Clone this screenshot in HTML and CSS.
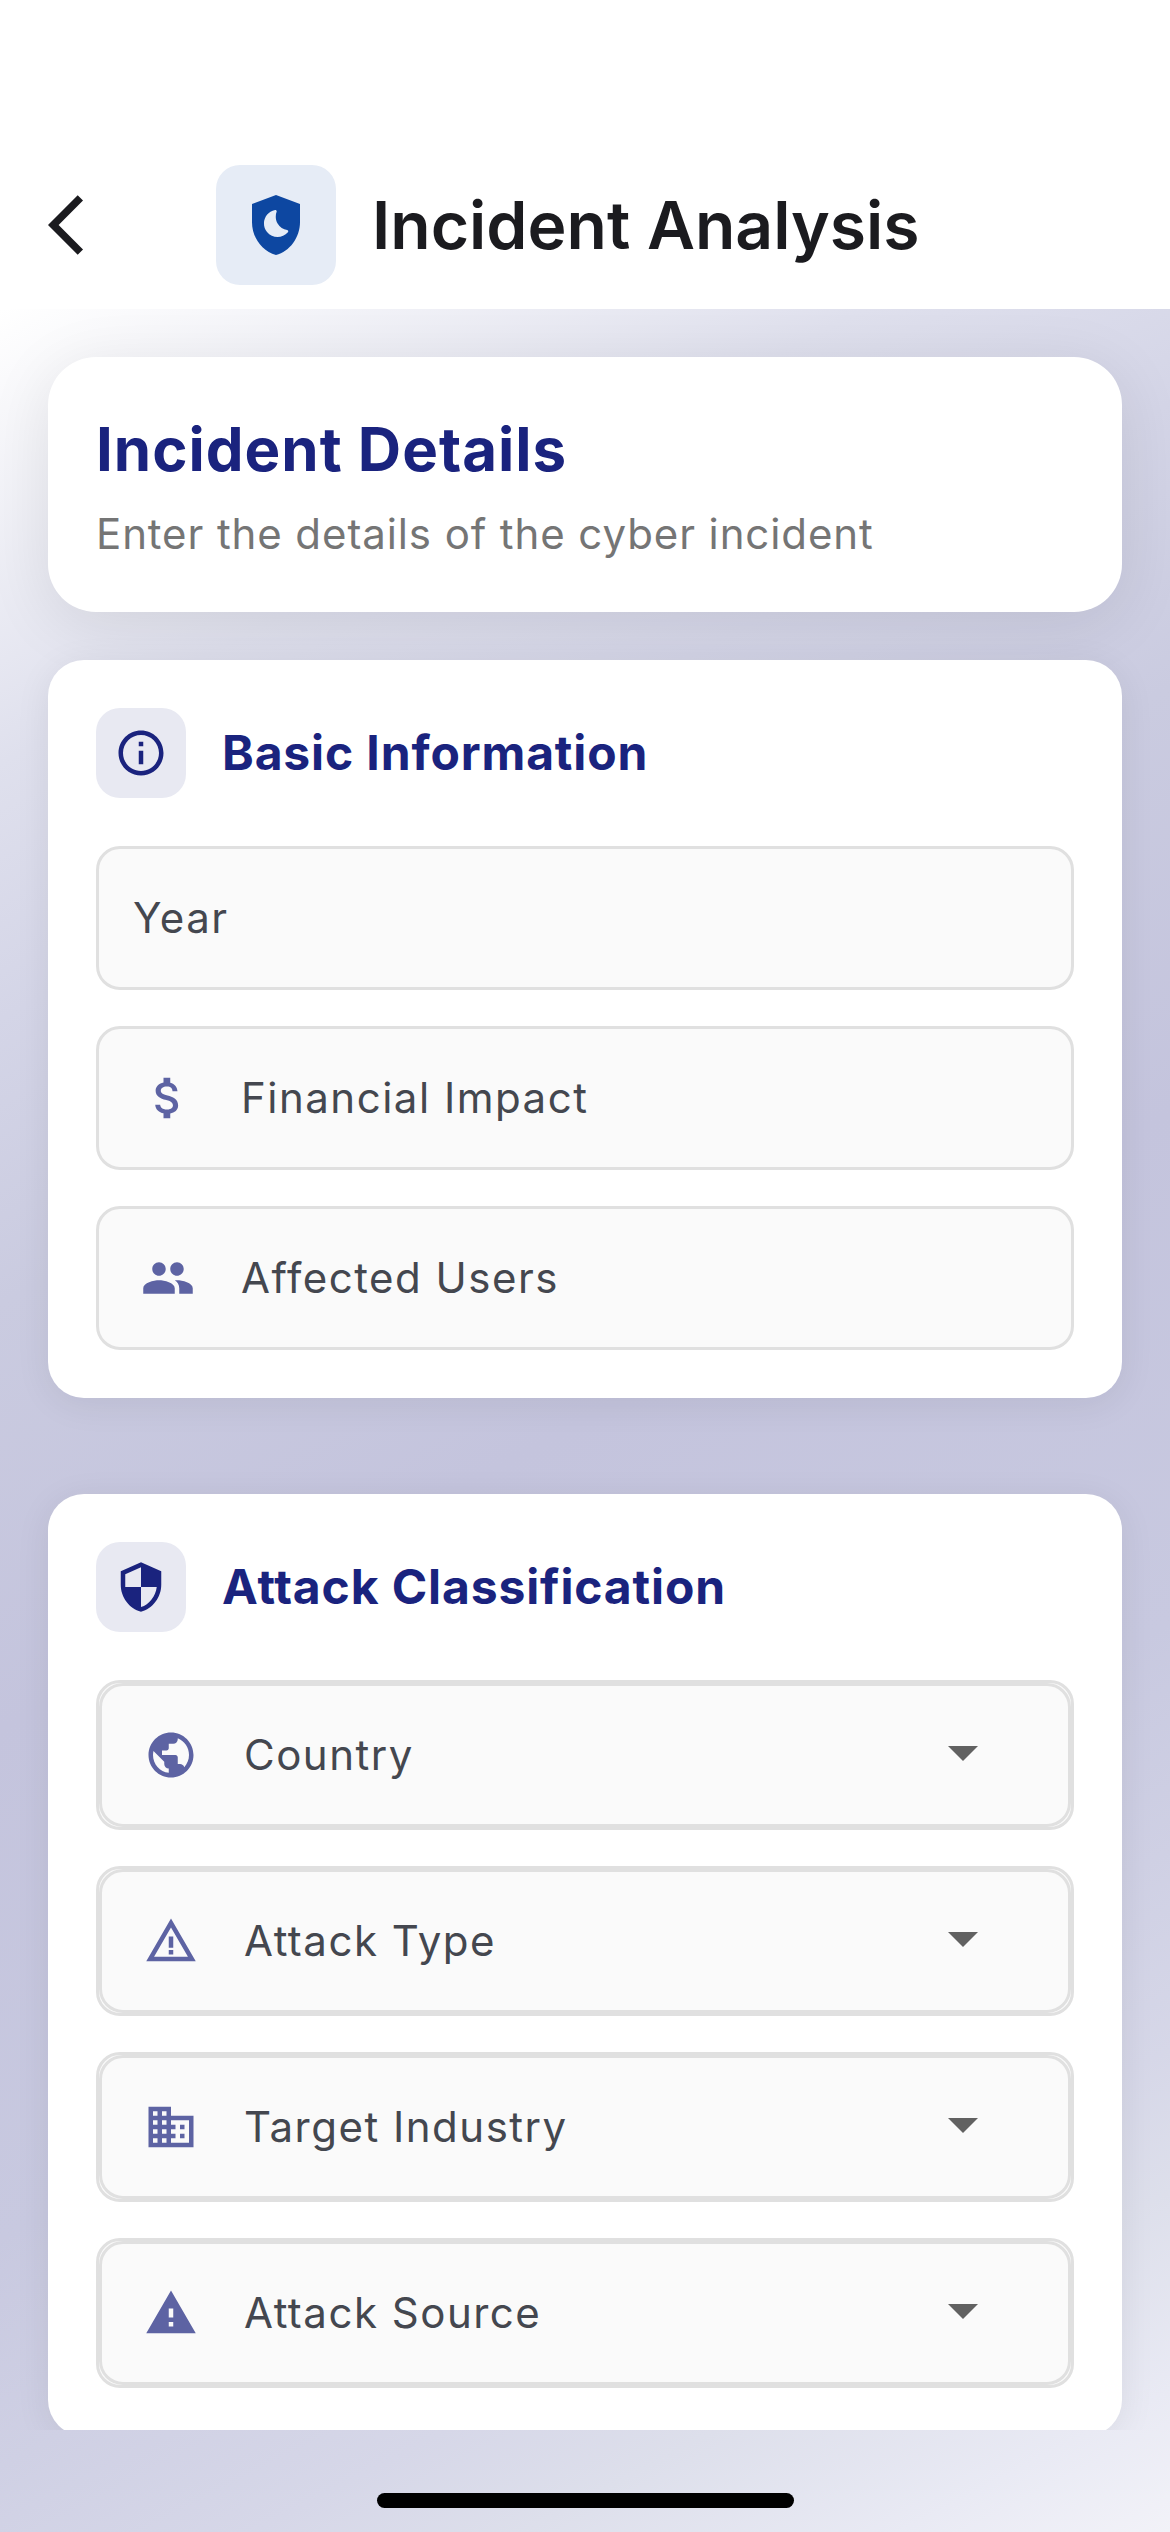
FILE: index.html
```html
<!DOCTYPE html>
<html lang="en">
<head>
<meta charset="utf-8">
<title>Incident Analysis</title>
<link rel="stylesheet" href="styles.css">
</head>
<body>
<div class="screen">
  <header class="app-bar">
    <svg class="back" viewBox="0 0 24 24"><path d="M11.67 3.87L9.9 2.1 0 12l9.9 9.9 1.77-1.77L3.54 12z"/></svg>
    <div class="brand">
      <span class="brand-icon"><svg viewBox="0 0 24 24"><path fill-rule="evenodd" d="M12 2L4 5v6.09c0 5.05 3.41 9.76 8 10.91 4.59-1.15 8-5.86 8-10.91V5L12 2zM15.97 14.41c-1.84 2.17-5.21 2.1-6.96-.07-2.19-2.72-.65-6.72 2.69-7.33.34-.06.63.27.51.6-.46 1.23-.39 2.64.32 3.86s1.89 1.99 3.18 2.2c.34.05.49.47.26.74z"/></svg></span>
      <h1 class="title">Incident Analysis</h1>
    </div>
  </header>
  <main class="body">
    <div class="scroll">
      <section class="card intro">
        <h2 class="intro-title">Incident Details</h2>
        <p class="intro-text">Enter the details of the cyber incident</p>
      </section>

      <section class="card group">
        <div class="group-head">
          <span class="group-icon"><svg viewBox="0 0 24 24"><path d="M11 7h2v2h-2zm0 4h2v6h-2zm1-9C6.48 2 2 6.48 2 12s4.48 10 10 10 10-4.48 10-10S17.52 2 12 2zm0 18c-4.41 0-8-3.59-8-8s3.59-8 8-8 8 3.59 8 8-3.59 8-8 8z"/></svg></span>
          <h3 class="group-title">Basic Information</h3>
        </div>
        <div class="field plain"><span class="label">Year</span></div>
        <div class="field">
          <svg viewBox="0 0 24 24"><path d="M11.8 10.9c-2.27-.59-3-1.2-3-2.15 0-1.09 1.01-1.85 2.7-1.85 1.78 0 2.44.85 2.5 2.1h2.21c-.07-1.72-1.12-3.3-3.21-3.81V3h-3v2.16c-1.94.42-3.5 1.68-3.5 3.61 0 2.31 1.91 3.46 4.7 4.13 2.5.6 3 1.48 3 2.41 0 .69-.49 1.79-2.7 1.79-2.06 0-2.87-.92-2.98-2.1h-2.2c.12 2.19 1.76 3.42 3.68 3.83V21h3v-2.15c1.95-.37 3.5-1.5 3.5-3.55 0-2.84-2.43-3.81-4.7-4.4z"/></svg>
          <span class="label">Financial Impact</span>
        </div>
        <div class="field">
          <svg viewBox="0 0 24 24"><path d="M16 11c1.66 0 2.99-1.34 2.99-3S17.66 5 16 5c-1.66 0-3 1.34-3 3s1.34 3 3 3zm-8 0c1.66 0 2.99-1.34 2.99-3S9.66 5 8 5C6.34 5 5 6.34 5 8s1.34 3 3 3zm0 2c-2.33 0-7 1.17-7 3.5V19h14v-2.5c0-2.33-4.67-3.5-7-3.5zm8 0c-.29 0-.62.02-.97.05 1.16.84 1.97 1.97 1.97 3.45V19h6v-2.5c0-2.33-4.67-3.5-7-3.5z"/></svg>
          <span class="label">Affected Users</span>
        </div>
      </section>

      <section class="card group spaced">
        <div class="group-head">
          <span class="group-icon"><svg viewBox="0 0 24 24"><path d="M12 1L3 5v6c0 5.55 3.84 10.74 9 12 5.16-1.26 9-6.45 9-12V5l-9-4zm0 10.99h7c-.53 4.12-3.28 7.79-7 8.94V12H5V6.3l7-3.11v8.8z"/></svg></span>
          <h3 class="group-title">Attack Classification</h3>
        </div>
        <div class="select"><div class="field">
          <svg viewBox="0 0 24 24"><path d="M12 2C6.48 2 2 6.48 2 12s4.48 10 10 10 10-4.48 10-10S17.52 2 12 2zm-1 17.93c-3.95-.49-7-3.85-7-7.93 0-.62.08-1.21.21-1.79L9 15v1c0 1.1.9 2 2 2v1.93zm6.9-2.54c-.26-.81-1-1.39-1.9-1.39h-1v-3c0-.55-.45-1-1-1H8v-2h2c.55 0 1-.45 1-1V7h2c1.1 0 2-.9 2-2v-.41c2.93 1.19 5 4.06 5 7.41 0 2.08-.8 3.97-2.1 5.39z"/></svg>
          <span class="label">Country</span>
          <svg class="caret" viewBox="0 0 24 24"><path d="M7 10l5 5 5-5z"/></svg>
        </div></div>
        <div class="select"><div class="field">
          <svg viewBox="0 0 24 24"><path d="M12 5.99L19.53 19H4.47L12 5.99M12 2L1 21h22L12 2zm1 14h-2v2h2v-2zm0-6h-2v5h2v-5z"/></svg>
          <span class="label">Attack Type</span>
          <svg class="caret" viewBox="0 0 24 24"><path d="M7 10l5 5 5-5z"/></svg>
        </div></div>
        <div class="select"><div class="field">
          <svg viewBox="0 0 24 24"><path d="M12 7V3H2v18h20V7H12zM6 19H4v-2h2v2zm0-4H4v-2h2v2zm0-4H4V9h2v2zm0-4H4V5h2v2zm4 12H8v-2h2v2zm0-4H8v-2h2v2zm0-4H8V9h2v2zm0-4H8V5h2v2zm10 12h-8v-2h2v-2h-2v-2h2v-2h-2V9h8v10zm-2-8h-2v2h2v-2zm0 4h-2v2h2v-2z"/></svg>
          <span class="label">Target Industry</span>
          <svg class="caret" viewBox="0 0 24 24"><path d="M7 10l5 5 5-5z"/></svg>
        </div></div>
        <div class="select"><div class="field">
          <svg viewBox="0 0 24 24"><path d="M1 21h22L12 2 1 21zm12-3h-2v-2h2v2zm0-4h-2v-4h2v4z"/></svg>
          <span class="label">Attack Source</span>
          <svg class="caret" viewBox="0 0 24 24"><path d="M7 10l5 5 5-5z"/></svg>
        </div></div>
      </section>
    </div>
    <footer class="safe-area"><div class="home-indicator"></div></footer>
  </main>
</div>
</body>
</html>
```
FILE: styles.css
```css
* { box-sizing: border-box; margin: 0; padding: 0; }

body {
  font-family: Inter, "Liberation Sans", sans-serif;
  background: #fff;
}

svg { display: block; fill: currentColor; flex: none; }

.screen {
  display: flex;
  flex-direction: column;
  width: 1170px;
  height: 2532px;
  overflow: hidden;
}

.app-bar {
  display: flex;
  align-items: center;
  height: 309px;
  padding: 141px 48px 0;
  background: #fff;
  color: #1b1b1f;
}

.back { width: 72px; height: 72px; }

.brand {
  display: flex;
  align-items: center;
  gap: 36px;
  margin-left: 96px;
}

.brand-icon {
  padding: 24px;
  border-radius: 24px;
  background: #e6ecf6;
  color: #0d47a1;
}

.brand-icon svg { width: 72px; height: 72px; }

.title { font-size: 66px; font-weight: 600; white-space: nowrap; }

.body {
  display: flex;
  flex-direction: column;
  flex: 1;
  min-height: 0;
  background: linear-gradient(152.24deg,
    #ffffff 0%, #dfe0ed 16%, #d4d5e7 25%, #cacbe0 35%, #c4c4dd 50%,
    #c8c9e0 68%, #cfd0e4 76%, #d6d7e8 83%, #dddfeb 88%, #e9eaf4 95%, #f2f2f8 100%);
}

.scroll {
  flex: 1;
  min-height: 0;
  overflow: hidden;
  padding: 48px 48px 0;
}

.card { background: #fff; padding: 48px; }

.intro {
  height: 255px;
  border-radius: 48px;
  box-shadow: 0 12px 66px rgba(0, 0, 0, .09);
}

.intro-title {
  color: #1a237e;
  font-size: 60px;
  font-weight: 700;
  line-height: 89px;
  letter-spacing: 1px;
}

.intro-text {
  margin-top: 10px;
  color: #757575;
  font-size: 42px;
  line-height: 60px;
  letter-spacing: .9px;
}

.group {
  display: flex;
  flex-direction: column;
  gap: 36px;
  margin-top: 48px;
  border-radius: 36px;
  box-shadow: 0 6px 36px rgba(0, 0, 0, .07);
}

.group.spaced { margin-top: 96px; }

.group-head {
  display: flex;
  align-items: center;
  gap: 36px;
  margin-bottom: 12px;
  color: #1a237e;
}

.group-icon {
  padding: 18px;
  border-radius: 24px;
  background: #e8e9f2;
}

.group-icon svg, .field svg { width: 54px; height: 54px; }

.group-title {
  margin-bottom: 1px;
  font-size: 48px;
  font-weight: 700;
  letter-spacing: .87px;
}

.field {
  display: flex;
  align-items: center;
  gap: 46px;
  height: 144px;
  padding: 0 69px 0 42px;
  border: 3px solid #e0e0e0;
  border-radius: 24px;
  background: #fafafa;
}

.field.plain { padding-left: 34px; }

.label {
  margin-bottom: 1px;
  color: #44474f;
  font-size: 42px;
  letter-spacing: 1.5px;
}

.field svg { color: #5d63a3; }

.select {
  border: 3px solid #e0e0e0;
  border-radius: 24px;
  background: #fafafa;
}

.field svg.caret {
  width: 72px;
  height: 72px;
  margin: 0 0 6px auto;
  color: #616161;
}

.safe-area {
  display: flex;
  justify-content: center;
  height: 102px;
  padding-top: 63px;
}

.home-indicator {
  width: 417px;
  height: 15px;
  border-radius: 7.5px;
  background: #000;
}
```
